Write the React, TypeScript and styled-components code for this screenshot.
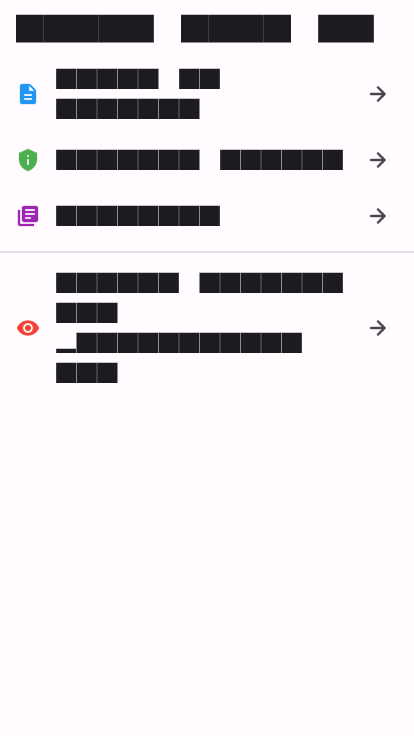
import React from "react";
import styled, { createGlobalStyle, css } from "styled-components";
import type { IconType } from "react-icons";
import {
  MdDescription,
  MdLibraryBooks,
  MdPrivacyTip,
  MdRemoveRedEye,
} from "react-icons/md";

const ink = "#1c1b1f";
const inkSeam = "#403f43";
const inkEdge = "#8d8c8f";
const inkFade = "#c6c4c8";

const GlobalStyle = createGlobalStyle`
  *, *::before, *::after { box-sizing: border-box; }
  body {
    margin: 0;
    background: #fffbff;
    color: ${ink};
    font-family: Roboto, "Liberation Sans", sans-serif;
  }
`;

const Page = styled.main`
  display: flex;
  flex-direction: column;
  min-height: 100vh;
`;

const Title = styled.h1`
  display: flex;
  flex-wrap: wrap;
  gap: 8px 27px;
  margin: 0;
  padding: 14px 16px 13px;
`;

/* Title blocks come in pairs, 55px to a pair, with one seam in each. */
const TitleWord = styled.span<{ $width: number; $phase: number }>`
  width: ${(p) => p.$width}px;
  height: 29px;
  border-top: 1px solid ${inkFade};
  border-bottom: 1px solid ${inkEdge};
  background: linear-gradient(
      90deg,
      ${ink} 27px,
      ${inkSeam} 27px,
      ${inkSeam} 28px,
      ${ink} 28px
    )
    ${(p) => -p.$phase}px 0 / 55px 100%;
`;

const List = styled.ul`
  margin: 0;
  padding: 0;
  list-style: none;
`;

const RowButton = styled.button`
  display: flex;
  align-items: center;
  gap: 16px;
  width: 100%;
  min-height: 56px;
  padding: 8px 24px 8px 16px;
  border: 0;
  background: transparent;
  color: inherit;
  font: inherit;
  text-align: left;
  cursor: pointer;

  &:hover {
    background: #f5f1f6;
  }

  svg {
    flex: none;
  }

  path[fill="none"] {
    stroke: none;
  }
`;

const Label = styled.span`
  flex: 1;
  min-width: 0;
  display: flex;
  flex-wrap: wrap;
  gap: 9px 20px;
  padding: 4px 0 5px;
`;

const Word = styled.span`
  display: flex;
  align-items: flex-end;
`;

/* Label blocks come in pairs, 41px to a pair. */
const Blocks = styled.span<{ $width: number; $phase: number; $low?: boolean }>`
  width: ${(p) => p.$width}px;
  height: 21px;
  border-top: 1px solid ${inkFade};
  background: linear-gradient(
      90deg,
      ${inkSeam} 1px,
      ${ink} 1px,
      ${ink} 20px,
      ${inkEdge} 20px,
      ${inkEdge} 21px,
      ${ink} 21px,
      ${ink} 40px,
      ${inkSeam} 40px
    )
    ${(p) => -p.$phase}px 0 / 41px 100%;
  ${(p) =>
    p.$low &&
    css`
      height: 5px;
    `}
`;

const Divider = styled.hr`
  width: 100%;
  height: 2px;
  margin: 7px 0;
  border: 0;
  background: #e5e0e8;
`;

function Arrow() {
  return (
    <svg
      width="24"
      height="24"
      viewBox="0 0 24 24"
      fill="#49454f"
      stroke="#49454f"
      strokeWidth="0.5"
      strokeLinejoin="round"
      aria-hidden="true"
    >
      <path d="M5 13h11.17l-4.88 4.88c-.39.39-.39 1.03 0 1.42.39.39 1.02.39 1.41 0l6.59-6.59c.39-.39.39-1.02 0-1.41l-6.58-6.6c-.39-.39-1.02-.39-1.41 0-.39.39-.39 1.02 0 1.41L16.17 11H5c-.55 0-1 .45-1 1s.45 1 1 1z" />
    </svg>
  );
}

type WordSpec = { count: number; phase?: number; lead?: boolean };

type RowProps = { icon: IconType; color: string; words: WordSpec[] };

function Row({ icon: Icon, color, words }: RowProps) {
  return (
    <li>
      <RowButton type="button">
        <Icon size={24} color={color} strokeWidth={0.3} stroke={color} aria-hidden="true" />
        <Label>
          {words.map(({ count, phase = 0, lead }, i) => (
            <Word key={i}>
              {lead && <Blocks $width={20} $phase={0} $low />}
              <Blocks $width={Math.ceil((count * 41) / 2)} $phase={phase} />
            </Word>
          ))}
        </Label>
        <Arrow />
      </RowButton>
    </li>
  );
}

export default function App() {
  return (
    <>
      <GlobalStyle />
      <Page>
        <Title>
          <TitleWord $width={138} $phase={0} />
          <TitleWord $width={110} $phase={0} />
          <TitleWord $width={56} $phase={27} />
        </Title>
        <List>
          <Row
            icon={MdDescription}
            color="#2196f3"
            words={[{ count: 5 }, { count: 2 }, { count: 7 }]}
          />
          <Row
            icon={MdPrivacyTip}
            color="#4caf50"
            words={[{ count: 7 }, { count: 6 }]}
          />
          <Row icon={MdLibraryBooks} color="#9c27b0" words={[{ count: 8 }]} />
        </List>
        <Divider />
        <List>
          <Row
            icon={MdRemoveRedEye}
            color="#f44336"
            words={[
              { count: 6 },
              { count: 7, phase: 20 },
              { count: 3 },
              { count: 11, phase: 20, lead: true },
              { count: 3 },
            ]}
          />
        </List>
      </Page>
    </>
  );
}
